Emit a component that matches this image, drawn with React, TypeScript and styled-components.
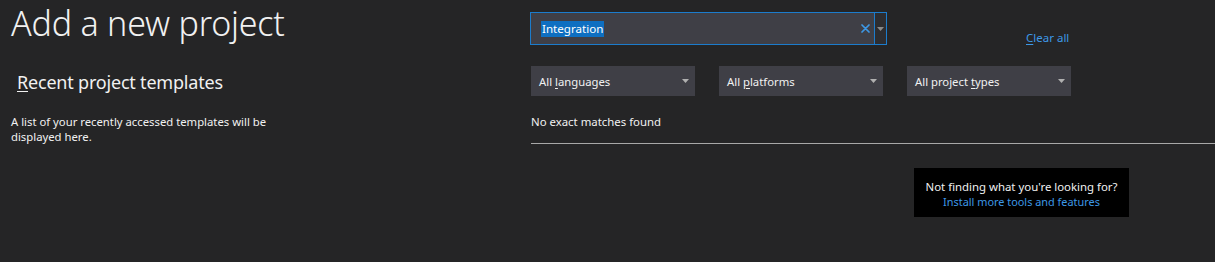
import styled, { createGlobalStyle } from "styled-components";

const GlobalStyle = createGlobalStyle`
  html, body {
    margin: 0;
    padding: 0;
    background: #252526;
  }
  body {
    font-family: "Noto Sans", "Open Sans", sans-serif;
    color: #f1f1f1;
  }
`;

const Page = styled.div`
  width: 1215px;
  height: 262px;
  display: flex;
  overflow: hidden;
  background: #252526;
`;

const LeftColumn = styled.div`
  width: 530px;
  flex-shrink: 0;
  display: flex;
  flex-direction: column;
  padding-left: 11px;
  box-sizing: border-box;
`;

const Title = styled.h1`
  margin: 0;
  font-size: 34px;
  font-weight: 300;
  line-height: 46px;
  letter-spacing: -0.2px;
`;

const SectionTitle = styled.h2`
  margin: 24px 0 0 6px;
  font-size: 18px;
  font-weight: 400;
  line-height: 24px;
  letter-spacing: -0.2px;
`;

const Hotkey = styled.span`
  text-decoration: underline;
  text-underline-offset: 2px;
  text-decoration-thickness: 1px;
`;

const Hint = styled.p`
  margin: 20px 0 0 0;
  width: 270px;
  font-size: 11.3px;
  line-height: 15px;
`;

const RightColumn = styled.div`
  flex: 1;
  display: flex;
  flex-direction: column;
  padding-top: 12px;
`;

const SearchRow = styled.div`
  display: flex;
  align-items: flex-start;
  height: 33px;
`;

const SearchBox = styled.div`
  width: 357px;
  height: 33px;
  box-sizing: border-box;
  border: 1px solid #1c7ccc;
  background: #3f3f46;
  display: flex;
  align-items: center;
`;

const SearchText = styled.div`
  flex: 1;
  padding-left: 10px;
  display: flex;
  align-items: center;
`;

const Selected = styled.span`
  background: #0e6fc1;
  color: #ffffff;
  font-size: 11.6px;
  line-height: 16px;
  padding: 0 1px;
`;

const ClearButton = styled.div`
  width: 18px;
  height: 31px;
  padding-right: 4px;
  display: flex;
  align-items: center;
  justify-content: flex-end;
`;

const DropButton = styled.div`
  width: 11px;
  height: 31px;
  border-left: 1px solid #1c7ccc;
  background: #2d2d30;
  display: flex;
  align-items: center;
  justify-content: center;
`;

const Link = styled.a`
  color: #3d98e6;
  font-size: 11.5px;
  text-decoration: none;
  cursor: pointer;
`;

const ClearAll = styled(Link)`
  margin-left: 139px;
  margin-top: 18px;
`;

const FilterRow = styled.div`
  display: flex;
  gap: 24px;
  margin-top: 21px;
  margin-left: 1px;
`;

const Filter = styled.div`
  width: 164px;
  height: 30px;
  background: #3f3f46;
  display: flex;
  align-items: center;
  justify-content: space-between;
  padding: 0 6px 0 8px;
  box-sizing: border-box;
  font-size: 11.3px;
`;

const Status = styled.div`
  margin: 18px 0 0 1px;
  font-size: 11.4px;
  line-height: 16px;
`;

const Divider = styled.div`
  margin: 13px 0 0 1px;
  height: 1px;
  background: #a8a8a8;
`;

const Tip = styled.div`
  margin: 24px 0 0 384px;
  width: 215px;
  height: 49px;
  background: #000000;
  display: flex;
  flex-direction: column;
  align-items: center;
  justify-content: center;
  font-size: 11.4px;
  line-height: 15px;
  padding-top: 2px;
  box-sizing: border-box;
`;

const TipLink = styled(Link)`
  font-size: 10.9px;
`;

const Caret = ({ color = "#b0b0b0" }: { color?: string }) => (
  <svg width="7" height="4" viewBox="0 0 7 4">
    <path d="M0 0 H7 L3.5 4 Z" fill={color} />
  </svg>
);

const filters = [
  { before: "All ", key: "l", after: "anguages" },
  { before: "All ", key: "p", after: "latforms" },
  { before: "All project ", key: "t", after: "ypes" },
];

export default function App() {
  return (
    <>
      <GlobalStyle />
      <Page>
        <LeftColumn>
          <Title>Add a new project</Title>
          <SectionTitle>
            <Hotkey>R</Hotkey>ecent project templates
          </SectionTitle>
          <Hint>
            A list of your recently accessed templates will be displayed here.
          </Hint>
        </LeftColumn>
        <RightColumn>
          <SearchRow>
            <SearchBox>
              <SearchText>
                <Selected>Integration</Selected>
              </SearchText>
              <ClearButton>
                <svg width="9" height="9" viewBox="0 0 9 9">
                  <path
                    d="M1 1 L8 8 M8 1 L1 8"
                    stroke="#3d98e6"
                    strokeWidth="1.7"
                    strokeLinecap="round"
                  />
                </svg>
              </ClearButton>
              <DropButton>
                <Caret color="#8a8a8a" />
              </DropButton>
            </SearchBox>
            <ClearAll>
              <Hotkey>C</Hotkey>lear all
            </ClearAll>
          </SearchRow>
          <FilterRow>
            {filters.map((f) => (
              <Filter key={f.after}>
                <span>
                  {f.before}
                  <Hotkey>{f.key}</Hotkey>
                  {f.after}
                </span>
                <Caret />
              </Filter>
            ))}
          </FilterRow>
          <Status>No exact matches found</Status>
          <Divider />
          <Tip>
            <span>Not finding what you're looking for?</span>
            <TipLink>Install more tools and features</TipLink>
          </Tip>
        </RightColumn>
      </Page>
    </>
  );
}
